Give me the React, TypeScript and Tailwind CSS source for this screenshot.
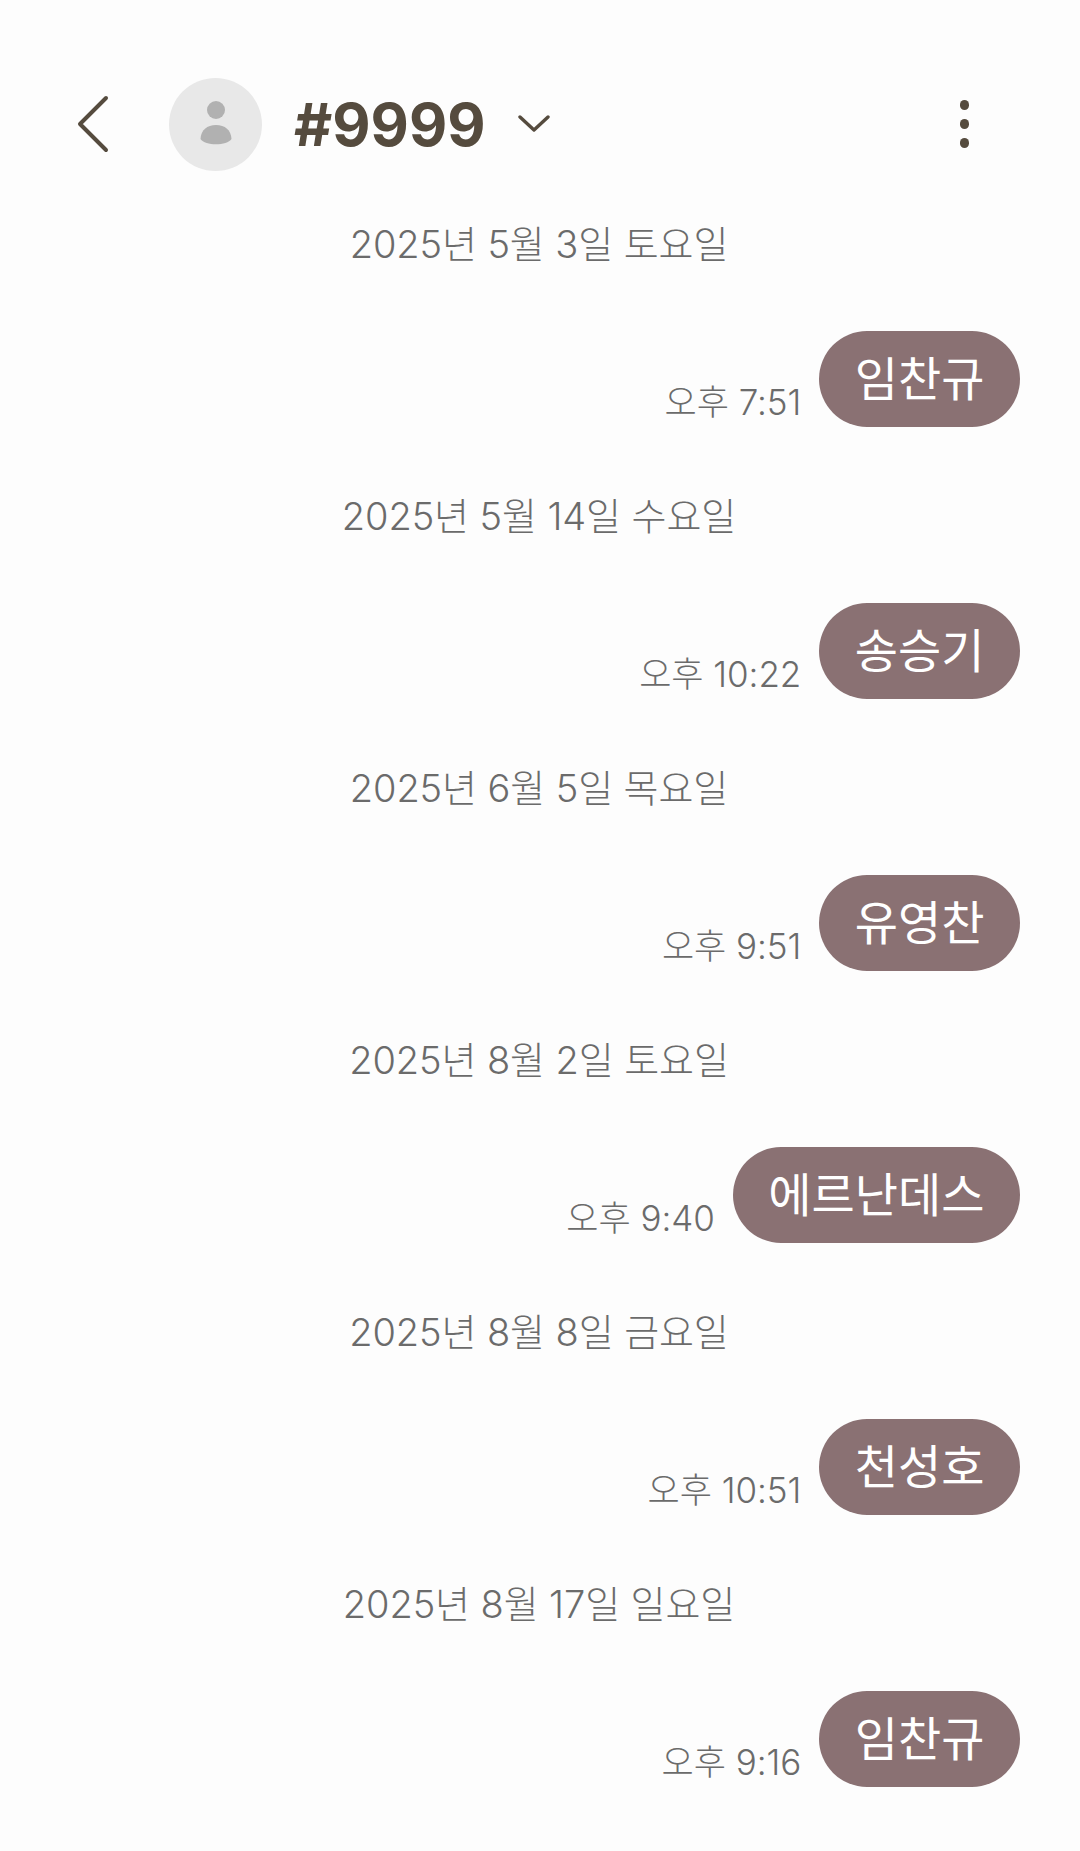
const KR = { fontFamily: '"Inter", "Noto Sans CJK KR", sans-serif' };

const threads = [
  { date: '2025년 5월 3일 토요일', time: '오후 7:51', name: '임찬규' },
  { date: '2025년 5월 14일 수요일', time: '오후 10:22', name: '송승기' },
  { date: '2025년 6월 5일 목요일', time: '오후 9:51', name: '유영찬' },
  { date: '2025년 8월 2일 토요일', time: '오후 9:40', name: '에르난데스' },
  { date: '2025년 8월 8일 금요일', time: '오후 10:51', name: '천성호' },
  { date: '2025년 8월 17일 일요일', time: '오후 9:16', name: '임찬규' },
];

function Thread({ date, time, name }: { date: string; time: string; name: string }) {
  return (
    <div className="flex flex-col">
      <div className="h-[48px] pt-[1px] flex items-center justify-center pr-[2px] text-[38px] leading-[48px] font-light text-[#6b6b6b] tracking-[-0.1px]">
        {date}
      </div>
      <div className="mt-[64px] mb-[64px] flex items-end justify-end gap-[18px] pr-[60px]">
        <span className="mb-[4px] text-[35px] leading-[42px] font-light text-[#6b6b6b] tracking-[-0.05px]">{time}</span>
        <div className="h-[96px] pt-[1px] rounded-[48px] bg-[#8a7173] px-[35.5px] flex items-center text-[47px] text-white">
          {name}
        </div>
      </div>
    </div>
  );
}

export default function App() {
  return (
    <div className="w-[1080px] h-[1851px] overflow-hidden bg-[#fdfdfd]" style={KR}>
      {/* Header */}
      <header className="h-[219px] flex items-start pt-[77px] pl-[76px] pr-[40px]">
        <div className="flex items-center h-[94px]">
          <svg width="33" height="58" viewBox="0 0 33 58" fill="none" className="mr-[60px]">
            <path d="M30 3 L4 29 L30 55" stroke="#554b3e" strokeWidth="4" strokeLinecap="round" strokeLinejoin="round" />
          </svg>
          <div className="w-[93px] h-[93px] rounded-full bg-[#e8e8e8] flex items-center justify-center">
            <svg width="32" height="46" viewBox="0 0 32 46">
              <circle cx="16" cy="9" r="9" fill="#b1b1b1" />
              <path d="M0.5 38 C1 29 7 24 16 24 C25 24 31 29 31.5 38 C27 45 5 45 0.5 38 Z" fill="#b1b1b1" />
            </svg>
          </div>
          <h1 className="ml-[32px] text-[59px] font-bold leading-none text-[#554b3e]">#9999</h1>
          <svg width="32" height="20" viewBox="0 0 32 20" fill="none" className="ml-[32px]">
            <path d="M2 3 L16 16 L30 3" stroke="#554b3e" strokeWidth="3.4" strokeLinecap="round" strokeLinejoin="round" />
          </svg>
        </div>
        <div className="ml-auto mr-[71px] h-[94px] flex flex-col items-center justify-center gap-[9.5px]">
          <span className="w-[9.5px] h-[9.5px] rounded-full bg-[#554b3e]" />
          <span className="w-[9.5px] h-[9.5px] rounded-full bg-[#554b3e]" />
          <span className="w-[9.5px] h-[9.5px] rounded-full bg-[#554b3e]" />
        </div>
      </header>
      {threads.map((t) => (
        <Thread key={t.date} {...t} />
      ))}
    </div>
  );
}
